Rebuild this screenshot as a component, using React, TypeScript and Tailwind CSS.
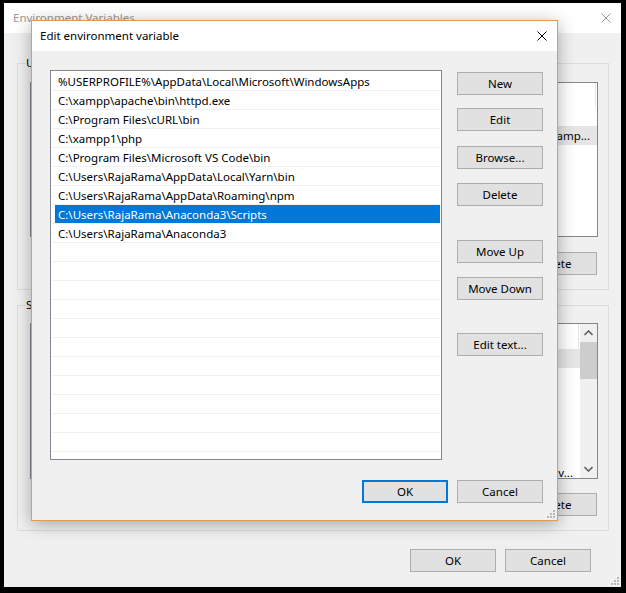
import React from "react";

const PATHS = [
  "%USERPROFILE%\\AppData\\Local\\Microsoft\\WindowsApps",
  "C:\\xampp\\apache\\bin\\httpd.exe",
  "C:\\Program Files\\cURL\\bin",
  "C:\\xampp1\\php",
  "C:\\Program Files\\Microsoft VS Code\\bin",
  "C:\\Users\\RajaRama\\AppData\\Local\\Yarn\\bin",
  "C:\\Users\\RajaRama\\AppData\\Roaming\\npm",
  "C:\\Users\\RajaRama\\Anaconda3\\Scripts",
  "C:\\Users\\RajaRama\\Anaconda3",
];
const SELECTED = 7;

// background lists: only the tail of the long values peeks out past the dialog
const USER_ROWS = ["", "C:\\xamp...", "", ""];
const SYS_ROWS = ["", "", "", "", "", "", "\\v..."];

function CloseIcon({ color }: { color: string }) {
  return (
    <svg width="10" height="10" viewBox="0 0 10 10" className="block">
      <path d="M0.5 0.5L9.5 9.5M9.5 0.5L0.5 9.5" stroke={color} strokeWidth="1" fill="none" />
    </svg>
  );
}

function Grip() {
  return (
    <svg width="8" height="8" viewBox="0 0 8 8" className="block">
      <g fill="#b8b8b8">
        <rect x="6" y="0" width="2" height="2" />
        <rect x="3" y="3" width="2" height="2" />
        <rect x="6" y="3" width="2" height="2" />
        <rect x="0" y="6" width="2" height="2" />
        <rect x="3" y="6" width="2" height="2" />
        <rect x="6" y="6" width="2" height="2" />
      </g>
    </svg>
  );
}

function Chevron({ up }: { up?: boolean }) {
  return (
    <svg width="9" height="6" viewBox="0 0 9 6" className="block">
      <path d={up ? "M0.5 5L4.5 1L8.5 5" : "M0.5 1L4.5 5L8.5 1"} stroke="#606060" strokeWidth="1.6" fill="none" />
    </svg>
  );
}

function WinButton({ label, focused = false }: { label: string; focused?: boolean }) {
  return (
    <button
      type="button"
      className={`flex h-[23px] w-[86px] shrink-0 items-center justify-center bg-[#e1e1e1] text-[11.5px] text-black ${
        focused ? "border-2 border-[#0078d7]" : "border border-[#adadad]"
      }`}
    >
      {label}
    </button>
  );
}

function VarList({ rows, headerH, scroll, height }: { rows: string[]; headerH: string; scroll?: boolean; height: string }) {
  const selected = scroll ? 0 : 1;
  return (
    <div className={`flex ${height} overflow-hidden border border-[#828790] bg-white`}>
      <div className="min-w-0 flex-1">
        <div className={`flex ${headerH}`}>
          <div className="w-[150px] border-r border-[#e5e5e5]" />
          <div className="mr-[1px] flex-1 border-r border-[#e5e5e5]" />
        </div>
        {rows.map((value, i) => (
          <div
            key={i}
            className={`flex h-[19px] items-center justify-end whitespace-nowrap pr-[7px] text-[11.5px] text-black ${
              i === selected ? "bg-[#e5e5e5]" : ""
            }`}
          >
            {value}
          </div>
        ))}
      </div>
      {scroll && (
        <div className="flex w-[17px] shrink-0 flex-col items-center bg-[#f0f0f0]">
          <div className="flex h-[18px] items-center justify-center"><Chevron up /></div>
          <div className="h-[37px] w-[17px] bg-[#cdcdcd]" />
          <div className="flex-1" />
          <div className="flex h-[18px] items-center justify-center"><Chevron /></div>
        </div>
      )}
    </div>
  );
}

function GroupBox({ label, children, className }: { label: string; children: React.ReactNode; className: string }) {
  return (
    <div className={`relative border border-[#dcdcdc] pl-[12px] pr-[10px] ${className}`}>
      <span className="absolute -top-[9px] left-[7px] bg-[#f0f0f0] px-[1px] text-[11.5px] leading-[16px] text-black">{label}</span>
      {children}
    </div>
  );
}

export default function App() {
  return (
    <div className="relative h-[593px] w-[626px] overflow-hidden bg-black pl-[4px] pt-[3px] font-['Noto_Sans',sans-serif]">
      {/* background window: Environment Variables */}
      <div className="relative flex h-[584px] w-[617px] flex-col bg-[#f0f0f0]">
        <div className="flex h-[30px] shrink-0 items-center justify-between bg-white pl-[9px] pr-[10px] text-[11.5px] text-[#999]">
          <span>Environment Variables</span>
          <CloseIcon color="#999" />
        </div>
        <div className="flex flex-col pl-[13px] pr-[12px]">
          <GroupBox label="User variables for RajaRama" className="mt-[30px] h-[227px] pt-[18px]">
            <VarList rows={USER_ROWS} headerH="h-[24px]" height="h-[155px]" />
            <div className="mt-[15px] flex justify-end pr-[1px]">
              <WinButton label="Delete" />
            </div>
          </GroupBox>
          <GroupBox label="System variables" className="mt-[15px] h-[226px] pt-[17px]">
            <VarList rows={SYS_ROWS} headerH="h-[25px]" height="h-[156px]" scroll />
            <div className="mt-[14px] flex justify-end pr-[1px]">
              <WinButton label="Delete" />
            </div>
          </GroupBox>
          <div className="mr-[18px] mt-[18px] flex justify-end gap-[9px]">
            <WinButton label="OK" />
            <WinButton label="Cancel" />
          </div>
        </div>
        <div className="absolute bottom-[2px] right-[2px]"><Grip /></div>
      </div>

      {/* dialog: Edit environment variable */}
      <div className="absolute left-[31px] top-[20px] flex h-[501px] w-[527px] flex-col border border-[#e39a52] bg-[#f0f0f0] shadow-[0_3px_16px_rgba(0,0,0,0.32)]">
        <div className="flex h-[30px] shrink-0 items-center justify-between bg-white pl-[8px] pr-[10px] text-[11.5px] text-black">
          <span>Edit environment variable</span>
          <CloseIcon color="#000" />
        </div>
        <div className="relative flex flex-1 flex-col pl-[18px] pr-[13px] pt-[19px]">
          <div className="flex">
            <div className="h-[390px] w-[392px] overflow-hidden border border-[#828790] bg-white pt-px">
              {Array.from({ length: 21 }).map((_, i) => {
                const text = PATHS[i] ?? "";
                const sel = i === SELECTED;
                return (
                  <div key={i} className="mx-px h-[19px] border-b border-[#f0f0f0]">
                    <div
                      className={`ml-[3px] h-[18px] whitespace-nowrap pl-[3px] text-[11.5px] leading-[19px] ${
                        sel ? "bg-[#0078d7] text-white" : "text-black"
                      }`}
                    >
                      {text}
                    </div>
                  </div>
                );
              })}
            </div>
            <div className="ml-[15px] flex w-[86px] flex-col pt-[2px]">
              <WinButton label="New" />
              <div className="mt-[13px]"><WinButton label="Edit" /></div>
              <div className="mt-[15px]"><WinButton label="Browse..." /></div>
              <div className="mt-[14px]"><WinButton label="Delete" /></div>
              <div className="mt-[34px]"><WinButton label="Move Up" /></div>
              <div className="mt-[14px]"><WinButton label="Move Down" /></div>
              <div className="mt-[33px]"><WinButton label="Edit text..." /></div>
            </div>
          </div>
          <div className="mt-[20px] flex justify-end gap-[9px] pr-px">
            <WinButton label="OK" focused />
            <WinButton label="Cancel" />
          </div>
          <div className="absolute bottom-[2px] right-[2px]"><Grip /></div>
        </div>
      </div>
    </div>
  );
}
